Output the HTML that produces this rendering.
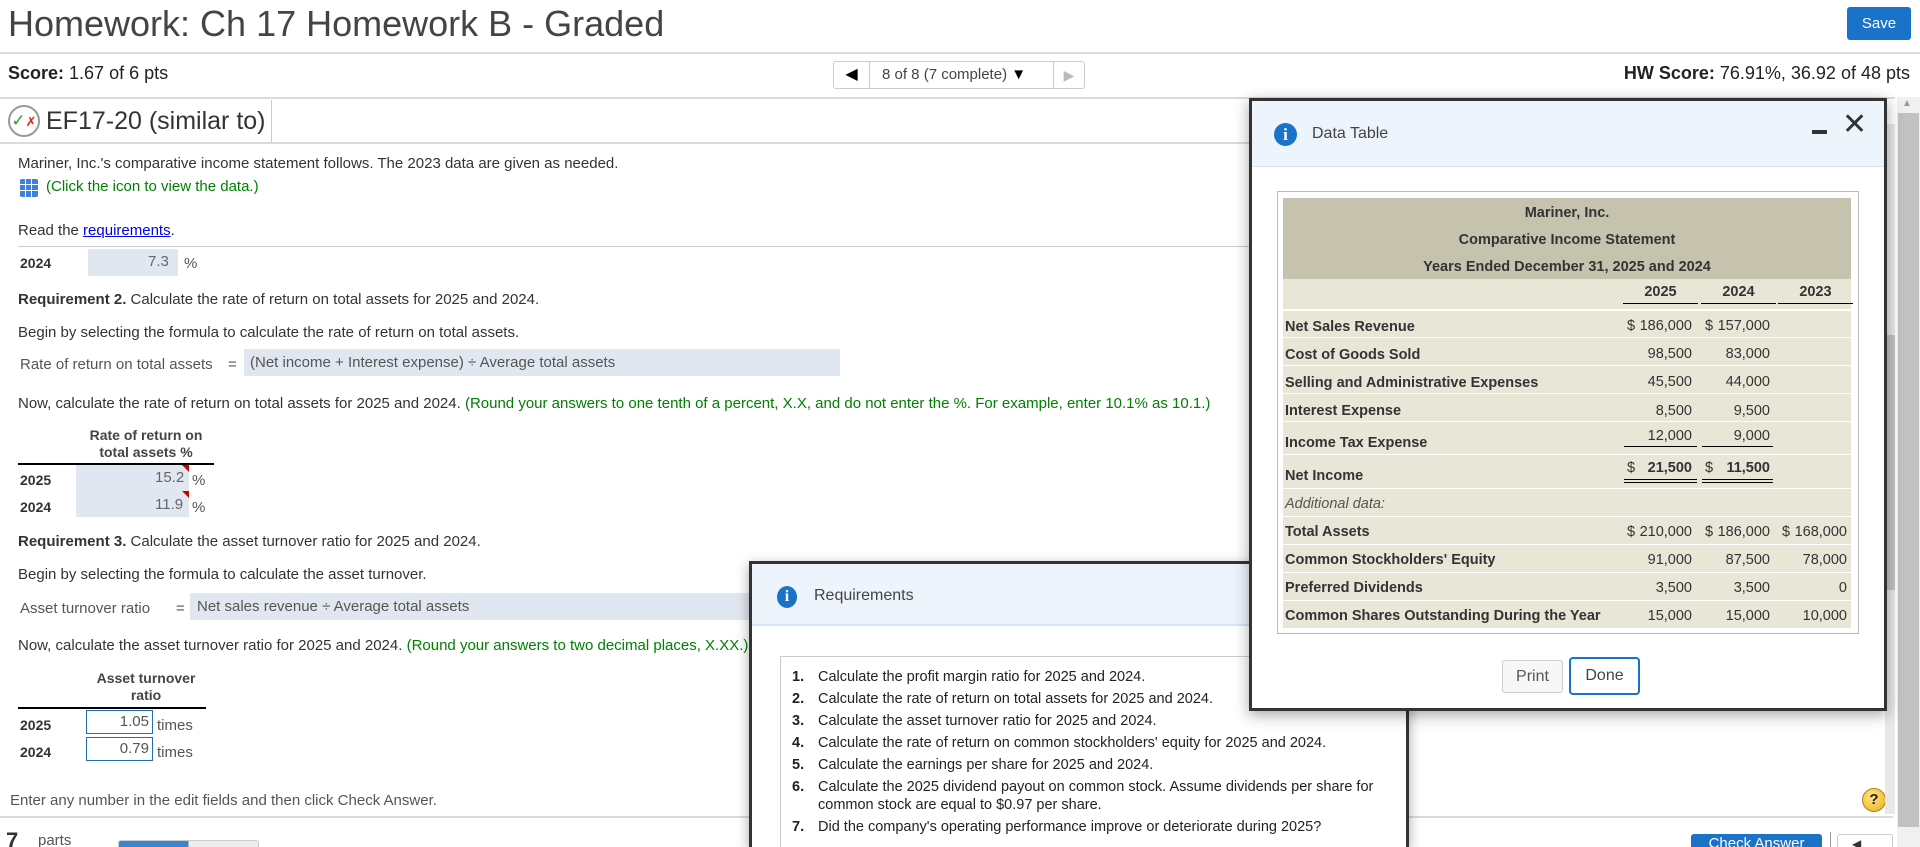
<!DOCTYPE html>
<html><head><meta charset="utf-8"><style>
*{margin:0;padding:0;box-sizing:border-box}
html{height:847px;overflow:hidden}
body{width:1920px;height:847px;overflow:hidden;background:#fff;font-family:"Liberation Sans",Arial,sans-serif;color:#333;position:relative;font-size:15px}
.a{position:absolute;white-space:nowrap}
.hl{position:absolute;height:2px;background:#d5dbe4}
.g{color:#008000}
.b{font-weight:bold}
.inp{position:absolute;background:#e1e7f1}
.box{position:absolute;border:1px solid #1f6fb2;background:#fff;text-align:right;padding-right:3px;color:#555}
</style></head><body>
<div class="a" style="left:8px;top:3px;font-size:36px;color:#444">Homework: Ch 17 Homework B - Graded</div>
<div class="a" style="left:1847px;top:7px;width:64px;height:33px;background:#1a73c8;border-radius:3px;color:#fff;font-size:15px;line-height:33px;text-align:center">Save</div>
<div class="hl" style="left:0;top:52px;width:1920px"></div>
<div class="a" style="left:8px;top:63px;font-size:18px;color:#222"><b>Score:</b> 1.67 of 6 pts</div>
<div class="a" style="left:833px;top:61px;width:252px;height:28px;border:1px solid #ccc;border-radius:3px;background:#fff"></div>
<div class="a" style="left:834px;top:62px;width:36px;height:26px;border-right:1px solid #ccc;font-size:16px;line-height:26px;text-align:center;color:#000">◀</div>
<div class="a" style="left:882px;top:66px;font-size:15px;color:#444">8 of 8 (7 complete) <span style="color:#000">▼</span></div>
<div class="a" style="left:1053px;top:62px;width:31px;height:26px;border-left:1px solid #ccc;font-size:14px;line-height:26px;text-align:center;color:#bbb">▶</div>
<div class="a" style="right:10px;top:63px;font-size:18px;color:#222"><b>HW Score:</b> 76.91%, 36.92 of 48 pts</div>
<div class="hl" style="left:0;top:97px;width:1895px"></div>
<div class="a" style="left:8px;top:105px;width:32px;height:32px;border:2px solid #999;border-radius:50%;background:#fff;font-size:17px;line-height:28px;text-align:center"><span style="color:#2a2">✓</span><span style="color:#d22;font-size:13px">✗</span></div>
<div class="a" style="left:46px;top:107px;font-size:25px;color:#333">EF17-20 (similar to)</div>
<div class="a" style="left:271px;top:100px;width:1px;height:42px;background:#ccc"></div>
<div class="hl" style="left:0;top:142px;width:1895px"></div>
<div class="a" style="left:18px;top:155px">Mariner, Inc.'s comparative income statement follows. The 2023 data are given as needed.</div>
<div class="a" style="left:20px;top:179px;width:18px;height:18px;background:#3b82e0;border-radius:2px;background-image:linear-gradient(90deg,transparent 5px,#fff 5px,#fff 6px,transparent 6px,transparent 11px,#fff 11px,#fff 12px,transparent 12px),linear-gradient(180deg,transparent 5px,#fff 5px,#fff 6px,transparent 6px,transparent 11px,#fff 11px,#fff 12px,transparent 12px)"></div>
<div class="a g" style="left:46px;top:178px">(Click the icon to view the data.)</div>
<div class="a" style="left:18px;top:222px">Read the <span style="color:#00e;text-decoration:underline">requirements</span>.</div>
<div class="hl" style="left:18px;top:246px;width:1875px;height:1px;background:#ccc"></div>
<div class="a b" style="left:20px;top:255px;font-size:14px">2024</div>
<div class="inp" style="left:88px;top:249px;width:90px;height:27px"></div>
<div class="a" style="left:148px;top:253px;color:#666">7.3</div>
<div class="a" style="left:184px;top:255px;color:#555">%</div>
<div class="a" style="left:18px;top:291px"><b>Requirement 2.</b> Calculate the rate of return on total assets for 2025 and 2024.</div>
<div class="a" style="left:18px;top:324px">Begin by selecting the formula to calculate the rate of return on total assets.</div>
<div class="a" style="left:20px;top:356px;color:#555">Rate of return on total assets</div>
<div class="a" style="left:228px;top:356px;color:#555">=</div>
<div class="inp" style="left:244px;top:349px;width:596px;height:27px"></div>
<div class="a" style="left:250px;top:354px;color:#555">(Net income + Interest expense) ÷ Average total assets</div>
<div class="a" style="left:18px;top:395px">Now, calculate the rate of return on total assets for 2025 and 2024. <span class="g">(Round your answers to one tenth of a percent, X.X, and do not enter the %. For example, enter 10.1% as 10.1.)</span></div>
<div class="a b" style="left:76px;top:427px;width:140px;text-align:center;font-size:14px;line-height:17px;color:#444;white-space:normal">Rate of return on total assets %</div>
<div class="a" style="left:18px;top:463px;width:196px;height:2px;background:#000"></div>
<div class="inp" style="left:76px;top:465px;width:113px;height:52px"></div>
<div class="a" style="left:182px;top:465px;border-top:7px solid #c00;border-left:7px solid transparent"></div>
<div class="a" style="left:182px;top:491px;border-top:7px solid #c00;border-left:7px solid transparent"></div>
<div class="a b" style="left:20px;top:472px;font-size:14px">2025</div>
<div class="a" style="left:155px;top:469px;color:#666">15.2</div><div class="a" style="left:192px;top:472px;color:#555">%</div>
<div class="a b" style="left:20px;top:499px;font-size:14px">2024</div>
<div class="a" style="left:155px;top:496px;color:#666">11.9</div><div class="a" style="left:192px;top:499px;color:#555">%</div>
<div class="a" style="left:18px;top:533px"><b>Requirement 3.</b> Calculate the asset turnover ratio for 2025 and 2024.</div>
<div class="a" style="left:18px;top:566px">Begin by selecting the formula to calculate the asset turnover.</div>
<div class="a" style="left:20px;top:600px;color:#555">Asset turnover ratio</div>
<div class="a" style="left:176px;top:600px;color:#555">=</div>
<div class="inp" style="left:190px;top:593px;width:560px;height:27px"></div>
<div class="a" style="left:197px;top:598px;color:#555">Net sales revenue ÷ Average total assets</div>
<div class="a" style="left:18px;top:637px">Now, calculate the asset turnover ratio for 2025 and 2024. <span class="g">(Round your answers to two decimal places, X.XX.)</span></div>
<div class="a b" style="left:76px;top:670px;width:140px;text-align:center;font-size:14px;line-height:17px;color:#444;white-space:normal">Asset turnover<br>ratio</div>
<div class="a" style="left:18px;top:707px;width:188px;height:2px;background:#000"></div>
<div class="a b" style="left:20px;top:717px;font-size:14px">2025</div>
<div class="box" style="left:86px;top:710px;width:67px;height:24px;line-height:22px">1.05</div>
<div class="a" style="left:157px;top:717px;color:#555">times</div>
<div class="a b" style="left:20px;top:744px;font-size:14px">2024</div>
<div class="box" style="left:86px;top:737px;width:67px;height:24px;line-height:22px">0.79</div>
<div class="a" style="left:157px;top:744px;color:#555">times</div>
<div class="a" style="left:10px;top:792px;color:#555">Enter any number in the edit fields and then click Check Answer.</div>
<div class="hl" style="left:0;top:816px;width:1893px"></div>
<div class="a" style="left:6px;top:829px;height:18px;overflow:hidden;font-size:22px;line-height:24px;font-weight:bold;color:#333">7</div>
<div class="a" style="left:38px;top:832px;height:15px;overflow:hidden;color:#555">parts</div>
<div class="a" style="left:118px;top:840px;width:141px;height:7px;border:1px solid #ccc;border-bottom:none;border-radius:3px 3px 0 0;background:linear-gradient(90deg,#3b86d0 50%,#eee 50%)"></div>
<div class="a" style="left:1691px;top:834px;width:131px;height:13px;overflow:hidden;background:#1a73c8;border-radius:3px 3px 0 0;color:#fff;text-align:center;font-size:15px;line-height:20px">Check Answer</div>
<div class="a" style="left:1830px;top:832px;width:1px;height:15px;background:#999"></div>
<div class="a" style="left:1837px;top:834px;width:56px;height:13px;overflow:hidden;border:1px solid #ccc;border-bottom:none;border-radius:3px 3px 0 0;font-size:12px;line-height:18px;padding-left:14px">◀</div>
<div class="a" style="left:1862px;top:788px;width:24px;height:24px;border-radius:50%;background:radial-gradient(circle at 40% 35%,#ffe680,#e8b020);border:1px solid #b08010;text-align:center;font-weight:bold;font-size:15px;line-height:22px;color:#222">?</div>
<div class="a" style="left:1885px;top:124px;width:10px;height:690px;background:#e8e8e8"></div>
<div class="a" style="left:1885px;top:335px;width:10px;height:255px;background:#c4c4c4"></div>
<div class="a" style="left:1897px;top:97px;width:23px;height:750px;background:#f0f0f0"></div>
<div class="a" style="left:1898px;top:113px;width:21px;height:714px;background:#c1c1c1"></div>
<div class="a" style="left:1902px;top:98px;font-size:10px;color:#999">▲</div>
<!-- Requirements modal -->
<div class="a" style="left:749px;top:561px;width:660px;height:286px;border:3px solid #333;border-bottom:none;background:#fff;box-shadow:0 4px 12px rgba(0,0,0,.35);overflow:hidden">
<div style="position:absolute;left:0;top:0;right:0;height:62px;background:#eef4fc;border-bottom:2px solid #d6e4f5"></div>
<div class="a" style="left:25px;top:22px;width:20px;height:22px;border-radius:50%;background:#1a73c8;color:#fff;font-weight:bold;font-family:'Liberation Serif',serif;font-size:16px;text-align:center;line-height:22px">i</div>
<div class="a" style="left:62px;top:23px;font-size:16px;color:#444">Requirements</div>
<div class="a" style="left:28px;top:92px;width:628px;height:200px;border:1px solid #ccc"></div>
<div class="a" style="left:40px;top:102px;font-size:14.5px;color:#222;line-height:22px;white-space:normal;width:600px">
<div><b style="display:inline-block;width:26px">1.</b>Calculate the profit margin ratio for 2025 and 2024.</div>
<div><b style="display:inline-block;width:26px">2.</b>Calculate the rate of return on total assets for 2025 and 2024.</div>
<div><b style="display:inline-block;width:26px">3.</b>Calculate the asset turnover ratio for 2025 and 2024.</div>
<div><b style="display:inline-block;width:26px">4.</b>Calculate the rate of return on common stockholders' equity for 2025 and 2024.</div>
<div><b style="display:inline-block;width:26px">5.</b>Calculate the earnings per share for 2025 and 2024.</div>
<div style="line-height:18px;padding:2px 0"><b style="display:inline-block;width:26px">6.</b>Calculate the 2025 dividend payout on common stock. Assume dividends per share for<br><span style="padding-left:26px">common stock are equal to $0.97 per share.</span></div>
<div><b style="display:inline-block;width:26px">7.</b>Did the company's operating performance improve or deteriorate during 2025?</div>
</div></div>
<!-- Data table modal -->
<div class="a" style="left:1249px;top:98px;width:638px;height:613px;border:3px solid #333;background:#fff;box-shadow:0 4px 14px rgba(0,0,0,.35)">
<div style="position:absolute;left:0;top:0;right:0;height:66px;background:#eef4fc;border-bottom:1px solid #d6e4f5"></div>
<div class="a" style="left:22px;top:22px;width:23px;height:23px;border-radius:50%;background:#1a73c8;color:#fff;font-weight:bold;font-family:'Liberation Serif',serif;font-size:17px;text-align:center;line-height:23px">i</div>
<div class="a" style="left:60px;top:24px;font-size:16px;color:#444">Data Table</div>
<div class="a" style="left:560px;top:29px;width:15px;height:4px;background:#333"></div>
<div class="a" style="left:590px;top:6px;font-size:30px;color:#333;font-weight:300">✕</div>
<div class="a" style="left:25px;top:90px;width:582px;height:443px;border:1px solid #bbb"></div>
<div class="a" style="left:31px;top:97px;width:568px;height:430px;background:#e8e6d6"></div>
<div class="a" style="left:31px;top:97px;width:568px;height:81px;background:#c5c3ad;text-align:center;font-weight:bold;font-size:14.5px;color:#333;line-height:27px;padding-top:2px">Mariner, Inc.<br>Comparative Income Statement<br>Years Ended December 31, 2025 and 2024</div>
<div class="a b" style="left:371px;top:183px;width:75px;text-align:center;font-size:14.5px">2025</div>
<div class="a b" style="left:449px;top:183px;width:75px;text-align:center;font-size:14.5px">2024</div>
<div class="a b" style="left:526px;top:183px;width:75px;text-align:center;font-size:14.5px">2023</div>
<div class="a" style="left:371px;top:202px;width:75px;height:1px;background:#000"></div>
<div class="a" style="left:449px;top:202px;width:75px;height:1px;background:#000"></div>
<div class="a" style="left:526px;top:202px;width:75px;height:1px;background:#000"></div>
<div class="a" style="left:31px;top:208px;width:568px;height:2px;background:#fff"></div>
<div class="a" style="left:31px;top:236px;width:568px;height:1px;background:#fff"></div>
<div class="a" style="left:31px;top:264px;width:568px;height:1px;background:#fff"></div>
<div class="a" style="left:31px;top:292px;width:568px;height:1px;background:#fff"></div>
<div class="a" style="left:31px;top:320px;width:568px;height:1px;background:#fff"></div>
<div class="a" style="left:31px;top:353px;width:568px;height:1px;background:#fff"></div>
<div class="a" style="left:31px;top:387px;width:568px;height:1px;background:#fff"></div>
<div class="a" style="left:31px;top:415px;width:568px;height:1px;background:#fff"></div>
<div class="a" style="left:31px;top:443px;width:568px;height:1px;background:#fff"></div>
<div class="a" style="left:31px;top:471px;width:568px;height:1px;background:#fff"></div>
<div class="a" style="left:31px;top:499px;width:568px;height:1px;background:#fff"></div>
<div style="font-size:14.5px;color:#333">
<div class="a b" style="left:33px;top:218px">Net Sales Revenue</div>
<div class="a b" style="left:33px;top:246px">Cost of Goods Sold</div>
<div class="a b" style="left:33px;top:274px">Selling and Administrative Expenses</div>
<div class="a b" style="left:33px;top:302px">Interest Expense</div>
<div class="a b" style="left:33px;top:334px">Income Tax Expense</div>
<div class="a b" style="left:33px;top:367px">Net Income</div>
<div class="a" style="left:33px;top:395px;font-style:italic;color:#555">Additional data:</div>
<div class="a b" style="left:33px;top:423px">Total Assets</div>
<div class="a b" style="left:33px;top:451px">Common Stockholders' Equity</div>
<div class="a b" style="left:33px;top:479px">Preferred Dividends</div>
<div class="a b" style="left:33px;top:507px">Common Shares Outstanding During the Year</div>
<div class="a" style="left:375px;top:217px">$</div><div class="a" style="right:192px;top:217px">186,000</div>
<div class="a" style="left:453px;top:217px">$</div><div class="a" style="right:114px;top:217px">157,000</div>
<div class="a" style="right:192px;top:245px">98,500</div><div class="a" style="right:114px;top:245px">83,000</div>
<div class="a" style="right:192px;top:273px">45,500</div><div class="a" style="right:114px;top:273px">44,000</div>
<div class="a" style="right:192px;top:302px">8,500</div><div class="a" style="right:114px;top:302px">9,500</div>
<div class="a" style="right:192px;top:327px">12,000</div><div class="a" style="right:114px;top:327px">9,000</div>
<div class="a" style="left:372px;top:345px;width:73px;height:1px;background:#000"></div>
<div class="a" style="left:450px;top:345px;width:71px;height:1px;background:#000"></div>
<div class="a" style="left:375px;top:359px">$</div><div class="a b" style="right:192px;top:359px">21,500</div>
<div class="a" style="left:453px;top:359px">$</div><div class="a b" style="right:114px;top:359px">11,500</div>
<div class="a" style="left:372px;top:378px;width:73px;height:4px;border-top:1px solid #000;border-bottom:1px solid #000"></div>
<div class="a" style="left:450px;top:378px;width:71px;height:4px;border-top:1px solid #000;border-bottom:1px solid #000"></div>
<div class="a" style="left:375px;top:423px">$</div><div class="a" style="right:192px;top:423px">210,000</div>
<div class="a" style="left:453px;top:423px">$</div><div class="a" style="right:114px;top:423px">186,000</div>
<div class="a" style="left:530px;top:423px">$</div><div class="a" style="right:37px;top:423px">168,000</div>
<div class="a" style="right:192px;top:451px">91,000</div><div class="a" style="right:114px;top:451px">87,500</div><div class="a" style="right:37px;top:451px">78,000</div>
<div class="a" style="right:192px;top:479px">3,500</div><div class="a" style="right:114px;top:479px">3,500</div><div class="a" style="right:37px;top:479px">0</div>
<div class="a" style="right:192px;top:507px">15,000</div><div class="a" style="right:114px;top:507px">15,000</div><div class="a" style="right:37px;top:507px">10,000</div>
</div>
<div class="a" style="left:250px;top:559px;width:61px;height:33px;border:1px solid #ccc;border-radius:3px;background:#f7f7f7;text-align:center;line-height:31px;font-size:16px;color:#555">Print</div>
<div class="a" style="left:317px;top:556px;width:71px;height:38px;border:2px solid #1a73c8;border-radius:4px;background:#fff;text-align:center;line-height:34px;font-size:16px;color:#444">Done</div>
</div>
</body></html>
